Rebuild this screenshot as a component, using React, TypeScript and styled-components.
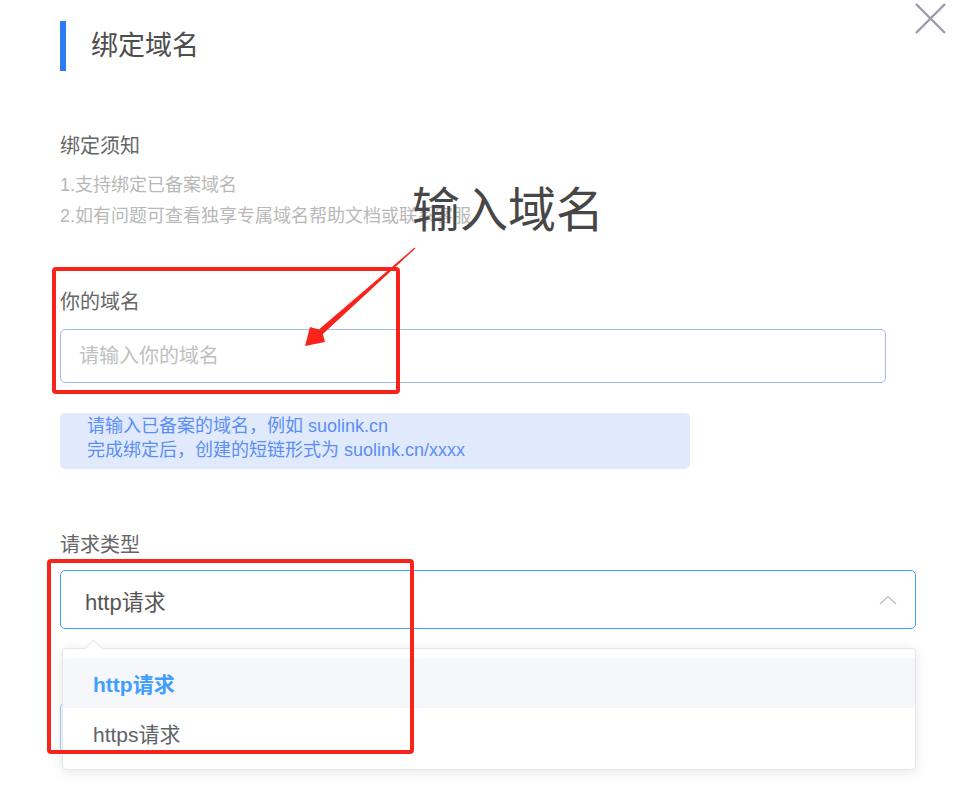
import React from "react";
import styled, { createGlobalStyle } from "styled-components";

const Global = createGlobalStyle`
  html, body { margin: 0; padding: 0; background: #ffffff; }
  * { box-sizing: border-box; }
  body { font-family: "Liberation Sans", "Noto Sans CJK SC", sans-serif; }
`;

const Page = styled.div`
  position: relative;
  width: 964px;
  height: 790px;
  overflow: hidden;
  padding: 21px 48px 0 60px;
  background: #fff;
  display: flex;
  flex-direction: column;
`;

const CloseButton = styled.button`
  position: absolute;
  top: 3px;
  right: 18px;
  width: 31px;
  height: 31px;
  padding: 0;
  border: none;
  background: transparent;
  cursor: pointer;
  display: flex;
`;

const Header = styled.div`
  display: flex;
  align-items: center;
  gap: 25px;
  height: 50px;
`;

const Bar = styled.div`
  width: 6px;
  height: 50px;
  background: #2d7cf6;
`;

const Title = styled.h2`
  margin: 0;
  font-size: 27px;
  font-weight: 400;
  line-height: 50px;
  color: #4d4d4d;
`;

const Section = styled.section<{ $top: number; $gap: number }>`
  display: flex;
  flex-direction: column;
  align-items: flex-start;
  gap: ${(p) => p.$gap}px;
  margin-top: ${(p) => p.$top}px;
`;

const SectionTitle = styled.div`
  font-size: 20px;
  line-height: 28px;
  color: #666;
`;

const NoticeList = styled.div`
  display: flex;
  flex-direction: column;
`;

const NoticeItem = styled.div`
  font-size: 18px;
  line-height: 31px;
  color: #b8b8b8;
  white-space: nowrap;
`;

const TextInput = styled.input`
  display: block;
  width: 826px;
  height: 54px;
  padding: 0 18px;
  border: 1px solid #a9b8ea;
  border-radius: 5px;
  font-family: inherit;
  font-size: 20px;
  color: #333;
  outline: none;
  &::placeholder { color: #c0c0c0; }
`;

const Hint = styled.div`
  width: 630px;
  height: 56px;
  padding: 1px 27px 0;
  background: #e1eafd;
  border-radius: 5px;
  font-size: 18px;
  line-height: 24px;
  color: #5a8ef6;
`;

const SelectWrap = styled.div`
  position: relative;
  width: 856px;
`;

const SelectBox = styled.div`
  display: flex;
  align-items: center;
  justify-content: space-between;
  height: 59px;
  padding: 0 18px 0 24px;
  border: 1px solid #409eff;
  border-radius: 5px;
  font-size: 22px;
  color: #555;
`;

const Dropdown = styled.ul`
  position: absolute;
  top: calc(100% + 19px);
  left: 2px;
  right: 0;
  margin: 0;
  padding: 9px 0 11px;
  list-style: none;
  background: #fff;
  border: 1px solid #e4e7ed;
  border-radius: 4px;
  box-shadow: 0 2px 12px rgba(0, 0, 0, 0.1);
  z-index: 2;
  &::before {
    content: "";
    position: absolute;
    top: -7px;
    left: 24px;
    width: 12px;
    height: 12px;
    background: #fff;
    border-top: 1px solid #e4e7ed;
    border-left: 1px solid #e4e7ed;
    transform: rotate(45deg);
  }
`;

const Option = styled.li<{ $active?: boolean }>`
  height: 50px;
  padding-left: 30px;
  display: flex;
  align-items: center;
  font-size: 21px;
  font-weight: ${(p) => (p.$active ? 700 : 400)};
  color: ${(p) => (p.$active ? "#409eff" : "#606266")};
  background: ${(p) => (p.$active ? "#f5f7fa" : "#fff")};
`;

const BehindButton = styled.div`
  margin-top: 63px;
  width: 160px;
  height: 50px;
  border: 1px solid #a8c8f8;
  border-radius: 4px;
`;

const AnnoBox = styled.div<{ $l: number; $t: number; $w: number; $h: number }>`
  position: absolute;
  left: ${(p) => p.$l}px;
  top: ${(p) => p.$t}px;
  width: ${(p) => p.$w}px;
  height: ${(p) => p.$h}px;
  border: 4px solid #f8231a;
  border-radius: 4px;
  z-index: 5;
  pointer-events: none;
`;

const AnnoArrow = styled.svg`
  position: absolute;
  left: 300px;
  top: 240px;
  width: 120px;
  height: 110px;
  z-index: 6;
  pointer-events: none;
`;

const AnnoText = styled.div`
  position: absolute;
  left: 412px;
  top: 182px;
  font-family: "Noto Sans CJK SC", sans-serif;
  font-size: 48px;
  line-height: 48px;
  color: #474747;
  z-index: 6;
  white-space: nowrap;
`;

export default function App() {
  return (
    <>
      <Global />
      <Page>
        <CloseButton aria-label="关闭">
          <svg width="31" height="31" viewBox="0 0 31 31">
            <path d="M1 1 L30 30 M30 1 L1 30" stroke="#9a9aac" strokeWidth="2.4" fill="none" />
          </svg>
        </CloseButton>

        <Header>
          <Bar />
          <Title>绑定域名</Title>
        </Header>

        <Section $top={61} $gap={10}>
          <SectionTitle>绑定须知</SectionTitle>
          <NoticeList>
            <NoticeItem>1.支持绑定已备案域名</NoticeItem>
            <NoticeItem>2.如有问题可查看独享专属域名帮助文档或联系客服</NoticeItem>
          </NoticeList>
        </Section>

        <Section $top={56} $gap={13}>
          <SectionTitle>你的域名</SectionTitle>
          <TextInput placeholder="请输入你的域名" />
        </Section>

        <Section $top={30} $gap={0}>
          <Hint>
            <div>请输入已备案的域名，例如 suolink.cn</div>
            <div>完成绑定后，创建的短链形式为 suolink.cn/xxxx</div>
          </Hint>
        </Section>

        <Section $top={62} $gap={11}>
          <SectionTitle>请求类型</SectionTitle>
          <SelectWrap>
            <SelectBox>
              <span>http请求</span>
              <svg width="18" height="10" viewBox="0 0 18 10">
                <path d="M1 9 L9 1.5 L17 9" stroke="#c0c4cc" strokeWidth="1.6" fill="none" />
              </svg>
            </SelectBox>
            <Dropdown>
              <Option $active>http请求</Option>
              <Option>https请求</Option>
            </Dropdown>
          </SelectWrap>
          <BehindButton />
        </Section>

        <AnnoText>输入域名</AnnoText>
        <AnnoBox $l={52} $t={267} $w={348} $h={127} />
        <AnnoBox $l={47} $t={559} $w={367} $h={195} />
        <AnnoArrow viewBox="0 0 120 110">
          <polygon
            points="5,106 10,87 18.9,89.6 114.6,7.6 115.4,8.4 22.9,94 25,102"
            fill="#f8231a"
          />
        </AnnoArrow>
      </Page>
    </>
  );
}
